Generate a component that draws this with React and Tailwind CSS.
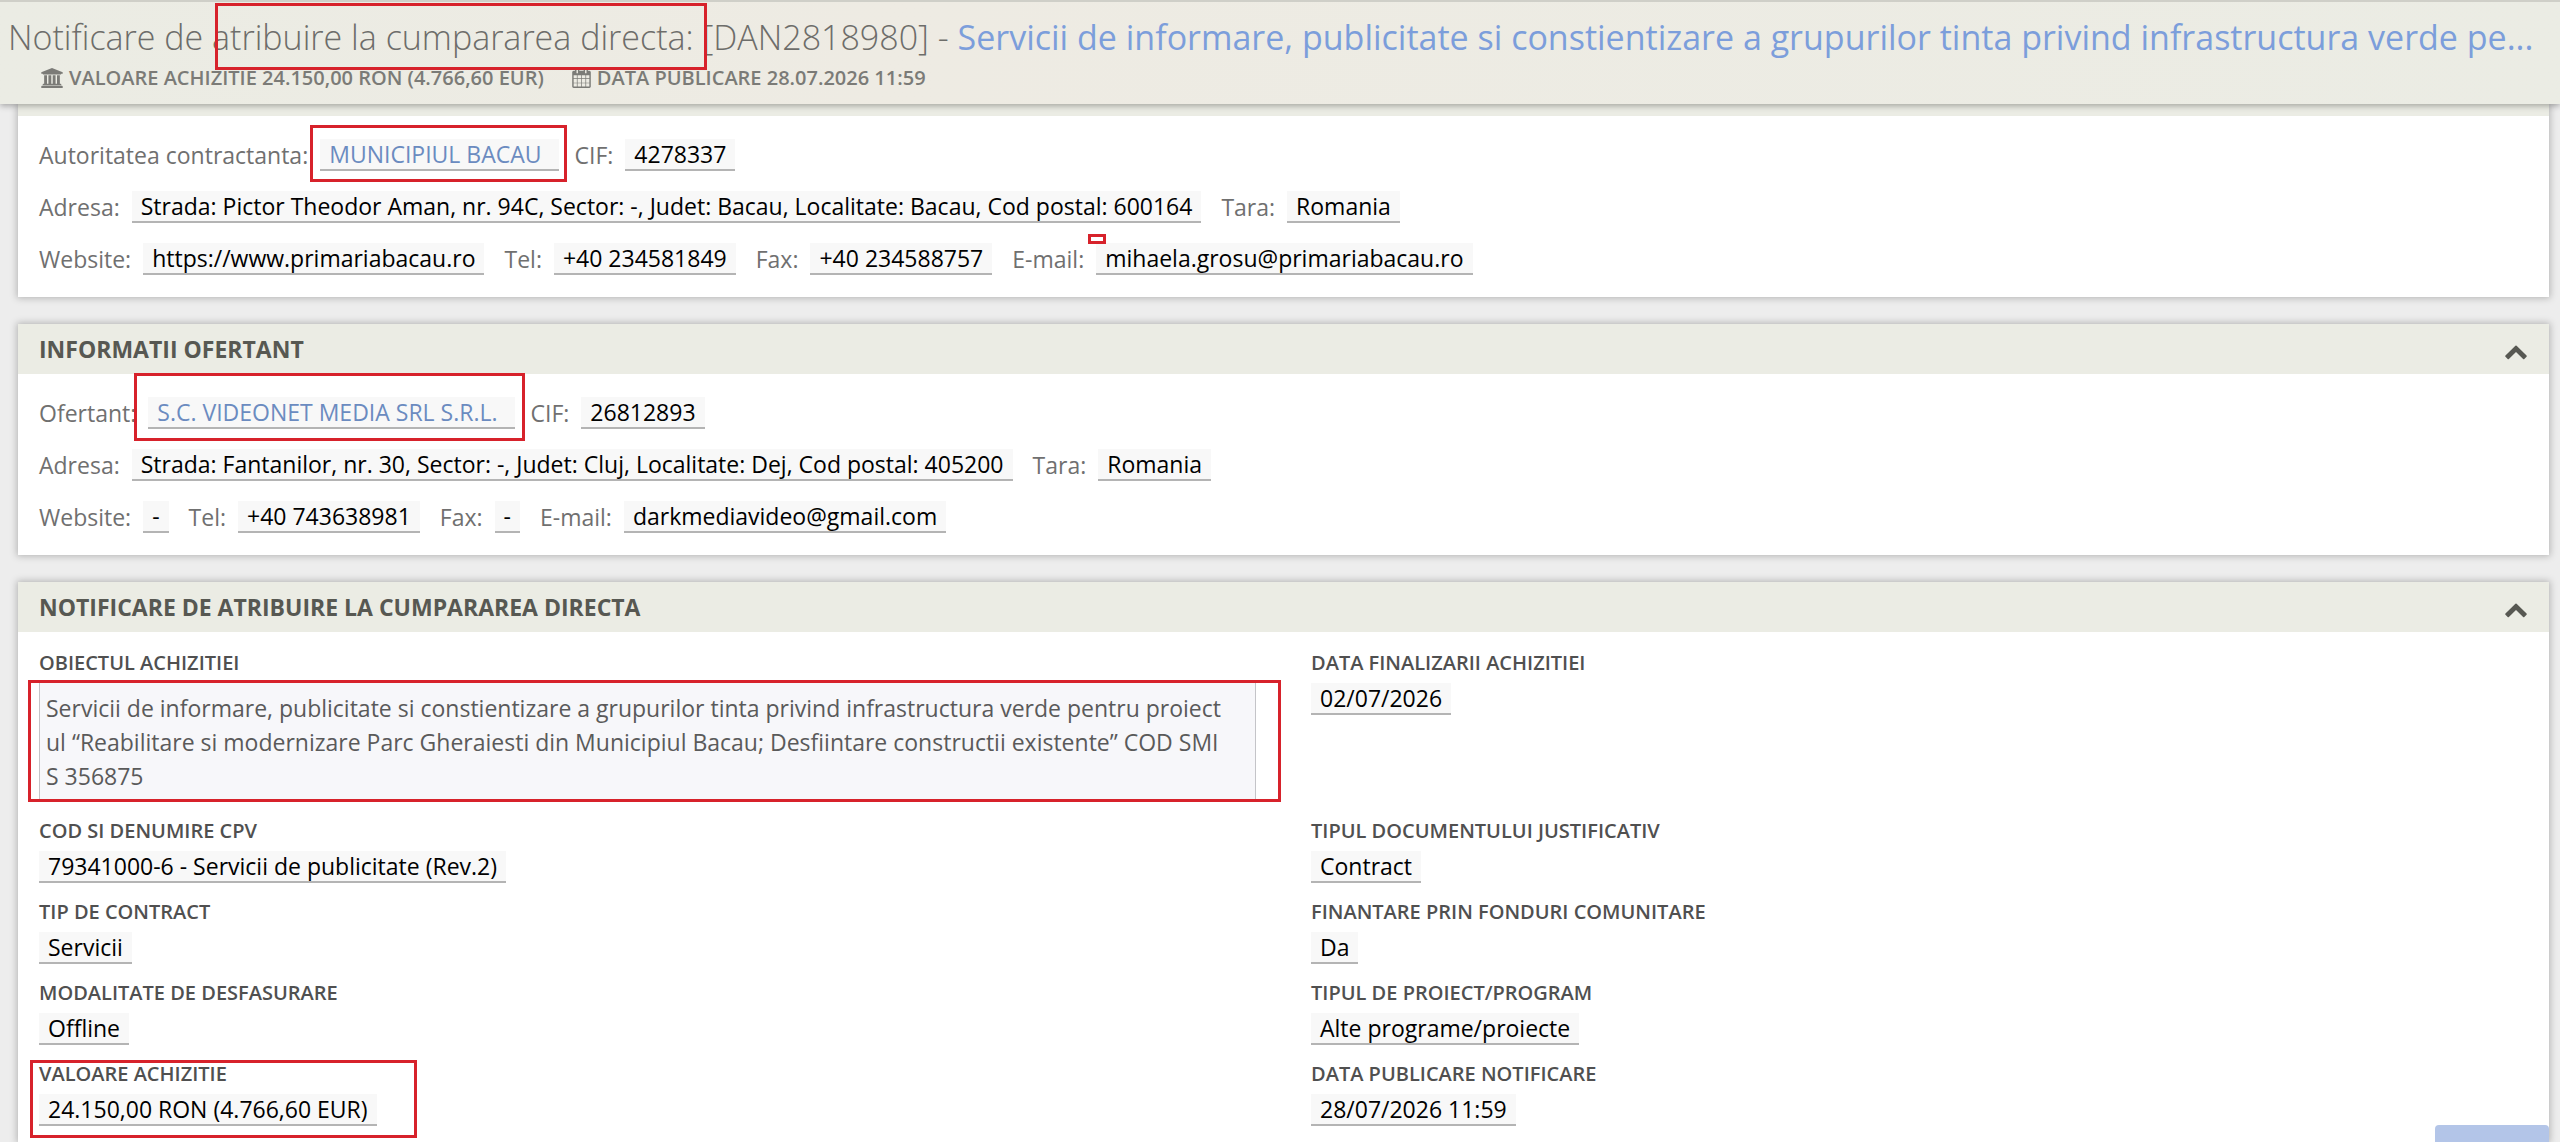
import React from "react";

const BankIcon = () => (
  <svg viewBox="0 0 1920 1792" className="h-[20px] w-[22px] shrink-0" fill="currentColor" aria-hidden="true">
    <path d="M960 0l960 384v128h-128q0 26-20.5 45t-48.5 19H197q-28 0-48.5-19T128 512H0V384zM256 640h256v768h128V640h256v768h128V640h256v768h128V640h256v768h59q28 0 48.5 19t20.5 45v64H128v-64q0-26 20.5-45t48.5-19h59V640zm1595 960q28 0 48.5 19t20.5 45v128H0v-128q0-26 20.5-45t48.5-19h1782z" />
  </svg>
);

const CalendarIcon = () => (
  <svg viewBox="0 0 1664 1792" className="h-[20px] w-[19px] shrink-0" fill="currentColor" aria-hidden="true">
    <path d="M128 1664h288v-288H128v288zm352 0h320v-288H480v288zm-352-352h288V992H128v320zm352 0h320V992H480v320zM128 928h288V640H128v288zm736 736h320v-288H864v288zM480 928h320V640H480v288zm768 736h288v-288h-288v288zm-384-352h320V992H864v320zM512 448V160q0-13-9.500-22.500T480 128h-64q-13 0-22.500 9.500T384 160v288q0 13 9.500 22.500T416 480h64q13 0 22.500-9.500T512 448zm736 864h288V992h-288v320zM864 928h320V640H864v288zm384 0h288V640h-288v288zm32-480V160q0-13-9.500-22.500T1248 128h-64q-13 0-22.500 9.500T1152 160v288q0 13 9.500 22.500t22.500 9.500h64q13 0 22.500-9.500t9.500-22.500zm384-64v1280q0 52-38 90t-90 38H128q-52 0-90-38t-38-90V384q0-52 38-90t90-38h128v-96q0-66 47-113t113-47h64q66 0 113 47t47 113v96h384v-96q0-66 47-113t113-47h64q66 0 113 47t47 113v96h128q52 0 90 38t38 90z" />
  </svg>
);

const ChevronIcon = () => (
  <svg viewBox="0 0 1792 1792" className="size-6" fill="currentColor" aria-hidden="true">
    <path d="M1683 1331l-166 165q-19 19-45 19t-45-19l-531-531-531 531q-19 19-45 19t-45-19l-166-165q-19-19-19-45.500t19-45.500l742-741q19-19 45-19t45 19l742 741q19 19 19 45.500t-19 45.500z" />
  </svg>
);

const Mark = ({ className }) => (
  <span className={`pointer-events-none absolute z-20 border-[3px] border-[#d7222b] ${className}`} aria-hidden="true" />
);

const Value = ({ children, href }) => (
  <span className="inline-block h-8 border-b-2 border-[#b4b4b4] bg-[#f8f8f8] px-[9px] leading-[30px] text-black">
    {href ? <a href={href} className="pr-2 text-[#6b8bc0]">{children}</a> : children}
  </span>
);

const Field = ({ label, value, href, mark }) => (
  <div className="flex items-center gap-3 leading-[30px]">
    <span className="text-[#707070]">{label}:</span>
    <span className="relative">
      <Value href={href}>{value}</Value>
      {mark && <Mark className={mark} />}
    </span>
  </div>
);

const Panel = ({ title, children }) => (
  <section className="bg-white shadow-[0_0_7px_1px_rgba(0,0,0,0.25)]">
    <div className="flex h-[50px] items-center justify-between bg-[#ebece4] px-[21px]">
      <h2 className="text-[23px] font-bold text-[#575852]">{title}</h2>
      <button type="button" aria-label={`Restrange ${title}`} className="mt-1 text-[#575852]">
        <ChevronIcon />
      </button>
    </div>
    {children}
  </section>
);

const Detail = ({ label, value, mark }) => (
  <div className="relative h-[81px]">
    <dt className="text-[20px] leading-[26px] font-semibold text-[#505050]">{label}</dt>
    <dd className="mt-[5px]">
      <Value>{value}</Value>
    </dd>
    {mark && <Mark className={mark} />}
  </div>
);

const details = [
  { label: "COD SI DENUMIRE CPV", value: "79341000-6 - Servicii de publicitate (Rev.2)" },
  { label: "TIPUL DOCUMENTULUI JUSTIFICATIV", value: "Contract" },
  { label: "TIP DE CONTRACT", value: "Servicii" },
  { label: "FINANTARE PRIN FONDURI COMUNITARE", value: "Da" },
  { label: "MODALITATE DE DESFASURARE", value: "Offline" },
  { label: "TIPUL DE PROIECT/PROGRAM", value: "Alte programe/proiecte" },
  { label: "VALOARE ACHIZITIE", value: "24.150,00 RON (4.766,60 EUR)", mark: "top-[-1px] left-[-9px] h-[78px] w-[387px]" },
  { label: "DATA PUBLICARE NOTIFICARE", value: "28/07/2026 11:59" },
];

const App = () => {
  return (
    <div className="h-screen overflow-hidden bg-[#ededed] font-['Open_Sans',sans-serif] text-[23px]">
      <header className="relative z-10 h-[104px] border-t-2 border-[#cfcfc8] bg-linear-to-r from-[#ebece4] via-[#eeebe3] via-35% to-[#ebece4] shadow-[0_2px_6px_rgba(0,0,0,0.3)]">
        <h1 className="px-2 pt-3 text-[34px] leading-[46px] font-light whitespace-nowrap text-[#6d6d6a]">
          Notificare de atribuire la cumpararea directa: [DAN2818980] -{" "}
          <a href="#achizitie" className="font-normal text-[#7c9edb]">
            Servicii de informare, publicitate si constientizare a grupurilor tinta privind infrastructura verde pe...
          </a>
        </h1>
        <Mark className="top-[1px] left-[215px] h-[67px] w-[492px]" />
        <div className="flex gap-7 pl-[41px] text-[20px] leading-[36px] font-semibold text-[#7b7b77]">
          <span className="flex items-center gap-[6px]"><BankIcon />VALOARE ACHIZITIE 24.150,00 RON (4.766,60 EUR)</span>
          <span className="flex items-center gap-[6px]"><CalendarIcon />DATA PUBLICARE 28.07.2026 11:59</span>
        </div>
      </header>

      <main className="flex flex-col gap-[27px] pr-[11px] pl-[18px]">
        <section className="bg-white shadow-[0_0_7px_1px_rgba(0,0,0,0.25)]">
          <div className="h-3 bg-[#ebece4]" />
          <div className="flex flex-col gap-5 px-[21px] pt-[23px] pb-[22px]">
            <div className="flex gap-4">
              <Field label="Autoritatea contractanta" value="MUNICIPIUL BACAU" href="#autoritate" mark="-top-[14px] -left-[10px] -right-2 h-[57px]" />
              <Field label="CIF" value="4278337" />
            </div>
            <div className="flex gap-5">
              <Field label="Adresa" value="Strada: Pictor Theodor Aman, nr. 94C, Sector: -, Judet: Bacau, Localitate: Bacau, Cod postal: 600164" />
              <Field label="Tara" value="Romania" />
            </div>
            <div className="flex gap-5">
              <Field label="Website" value="https://www.primariabacau.ro" />
              <Field label="Tel" value="+40 234581849" />
              <Field label="Fax" value="+40 234588757" />
              <Field label="E-mail" value="mihaela.grosu@primariabacau.ro" mark="-top-[9px] -left-2 h-[10px] w-[18px]" />
            </div>
          </div>
        </section>

        <Panel title="INFORMATII OFERTANT">
          <div className="flex flex-col gap-5 px-[21px] pt-[23px] pb-[22px]">
            <div className="flex gap-4">
              <Field label="Ofertant" value="S.C. VIDEONET MEDIA SRL S.R.L." href="#ofertant" mark="-top-6 -left-[14px] -right-[10px] h-[68px]" />
              <Field label="CIF" value="26812893" />
            </div>
            <div className="flex gap-5">
              <Field label="Adresa" value="Strada: Fantanilor, nr. 30, Sector: -, Judet: Cluj, Localitate: Dej, Cod postal: 405200" />
              <Field label="Tara" value="Romania" />
            </div>
            <div className="flex gap-5">
              <Field label="Website" value="-" />
              <Field label="Tel" value="+40 743638981" />
              <Field label="Fax" value="-" />
              <Field label="E-mail" value="darkmediavideo@gmail.com" />
            </div>
          </div>
        </Panel>

        <Panel title="NOTIFICARE DE ATRIBUIRE LA CUMPARAREA DIRECTA">
          <dl className="grid grid-cols-2 gap-x-[55px] px-[21px] pt-[18px]">
            <div className="relative h-[168px]">
              <dt className="text-[20px] leading-[26px] font-semibold text-[#505050]">OBIECTUL ACHIZITIEI</dt>
              <dd className="mt-[6px] h-[118px] border border-[#c4c4c8] bg-[#f7f7fa] pt-2 pr-7 pl-[6px] leading-[34px] break-all text-[#5a5a5a]">
                Servicii de informare, publicitate si constientizare a grupurilor tinta privind infrastructura verde pentru proiectul “Reabilitare si modernizare Parc Gheraiesti din Municipiul Bacau; Desfiintare constructii existente” COD SMIS 356875
              </dd>
              <Mark className="top-[30px] -right-[25px] -left-[11px] h-[122px]" />
            </div>
            <div>
              <dt className="text-[20px] leading-[26px] font-semibold text-[#505050]">DATA FINALIZARII ACHIZITIEI</dt>
              <dd className="mt-[5px]">
                <Value>02/07/2026</Value>
              </dd>
            </div>
            {details.map((d) => (
              <Detail key={d.label} label={d.label} value={d.value} mark={d.mark} />
            ))}
          </dl>
        </Panel>
      </main>

      <button type="button" aria-label="Sus" className="fixed right-[11px] bottom-0 z-10 h-[17px] w-[114px] rounded-t bg-[#b3c5e8]" />
    </div>
  );
};

export default App;
